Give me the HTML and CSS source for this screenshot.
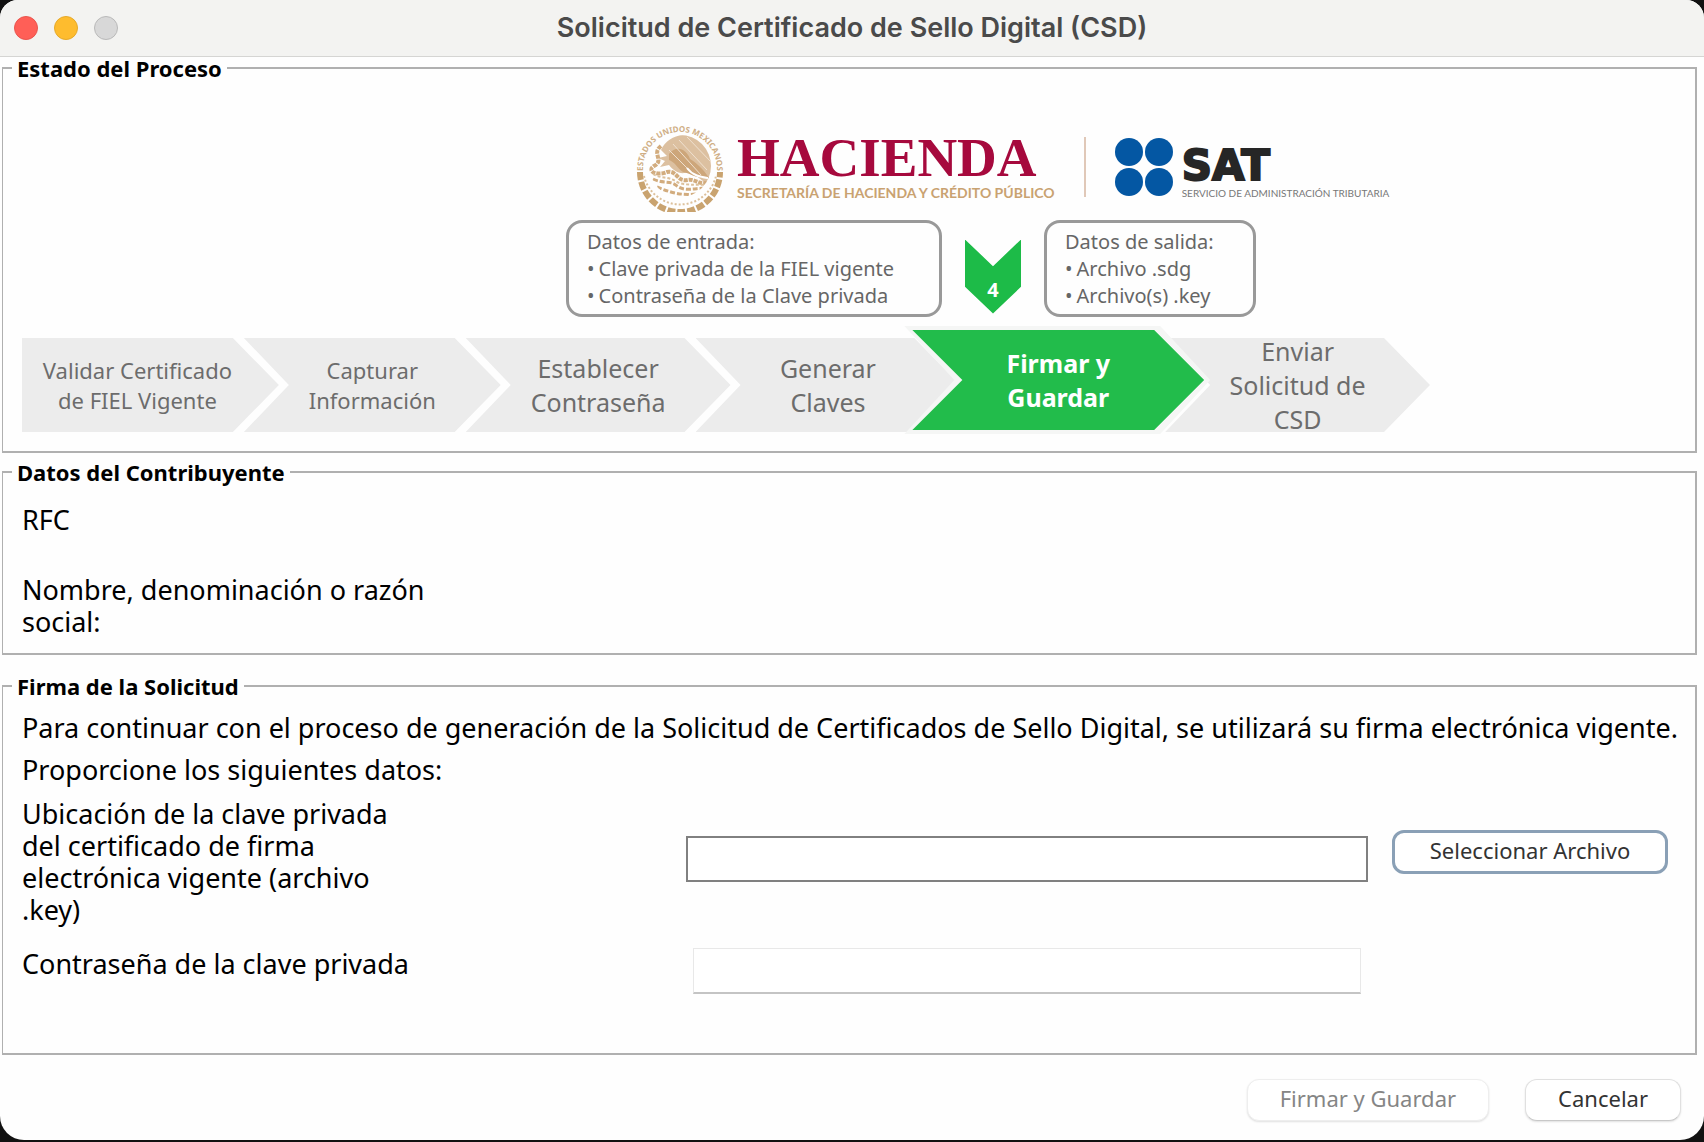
FILE: index.html
```html
<!DOCTYPE html>
<html lang="es">
<head>
    <meta charset="UTF-8">
    <meta name="viewport" content="width=device-width, initial-scale=1.0">
    <title>Solicitud de Certificado de Sello Digital (CSD)</title>
    <link rel="stylesheet" href="styles.css">
</head>
<body>
    <div class="window">
        <header class="titlebar">
            <div class="lights">
                <button type="button" class="light red" aria-label="Cerrar"></button>
                <button type="button" class="light yellow" aria-label="Minimizar"></button>
                <button type="button" class="light" aria-label="Ampliar" disabled></button>
            </div>
            <h1>Solicitud de Certificado de Sello Digital (CSD)</h1>
        </header>

        <form>
            <fieldset class="process">
                <legend>Estado del Proceso</legend>
                <div class="logos">
                    <svg class="emblem" viewBox="0 0 90 90" aria-hidden="true">
                        <defs>
                            <path id="ring" d="M8 47 A37 37 0 0 1 82 47"/>
                            <clipPath id="disc"><circle cx="45" cy="44" r="31"/></clipPath>
                        </defs>
                        <text class="ring-text"><textPath href="#ring" startOffset="50%" text-anchor="middle">ESTADOS UNIDOS MEXICANOS</textPath></text>
                        <g clip-path="url(#disc)">
                            <path fill="#dcc0a0" d="M26 28 C34 10 60 8 74 22 C82 36 78 52 72 62 L64 56 C60 52 55 50 50 51 C43 52 38 48 34 43 L25 45 L30 39 L23 36 L32 34 Z"/>
                            <path fill="#cda67a" d="M34 32 C42 22 52 28 55 37 C60 40 68 46 74 56 C62 57 54 51 48 50 C42 46 40 40 34 38 Z"/>
                            <path fill="none" stroke="#efe0cf" stroke-width="1" d="M44 18 L72 48 M52 15 L77 41 M38 22 L66 53 M60 14 L79 34 M34 28 L52 46"/>
                            <path fill="none" stroke="#fff" stroke-width="2" d="M52 46 C58 54 66 55 73 56"/>
                            <path fill="none" stroke="#d2ac7e" stroke-width="4" stroke-dasharray="4 1" d="M26 24 C16 32 30 38 19 44 C10 50 24 54 32 50 C42 48 42 60 52 58 C60 56 64 64 74 60"/>
                            <path fill="none" stroke="#d2ac7e" stroke-width="3" stroke-dasharray="5 2" d="M18 57 C28 62 36 58 42 64 C50 70 60 66 72 66 M22 65 C34 70 48 75 66 71"/>
                            <path fill="none" stroke="#dcc09b" stroke-width="2" stroke-dasharray="3 2" d="M18 52 C26 57 34 54 42 60 C50 64 60 62 72 63"/>
                        </g>
                        <path fill="none" stroke="#c9a36f" stroke-width="6" stroke-dasharray="8 2" d="M5 50 A40 40 0 0 0 85 50"/>
                        <path fill="none" stroke="#dcc09b" stroke-width="2" stroke-dasharray="2 2" d="M9 54 A37 37 0 0 0 81 54"/>
                    </svg>
                    <div class="hacienda">
                        <strong>HACIENDA</strong>
                        <span>SECRETARÍA DE HACIENDA Y CRÉDITO PÚBLICO</span>
                    </div>
                    <div class="divider"></div>
                    <svg class="dots" viewBox="0 0 58 60" aria-hidden="true">
                        <g fill="#0457a3">
                            <circle cx="14" cy="15" r="14"/>
                            <circle cx="44" cy="15" r="14"/>
                            <circle cx="14" cy="45" r="14"/>
                            <circle cx="44" cy="45" r="14"/>
                        </g>
                    </svg>
                    <div class="sat">
                        <strong>SAT</strong>
                        <span>SERVICIO DE ADMINISTRACIÓN TRIBUTARIA</span>
                    </div>
                </div>

                <div class="data">
                    <div class="note note-in">
                        <p>Datos de entrada:</p>
                        <ul>
                            <li>Clave privada de la FIEL vigente</li>
                            <li>Contraseña de la Clave privada</li>
                        </ul>
                    </div>
                    <div class="marker"><span>4</span></div>
                    <div class="note note-out">
                        <p>Datos de salida:</p>
                        <ul>
                            <li>Archivo .sdg</li>
                            <li>Archivo(s) .key</li>
                        </ul>
                    </div>
                </div>

                <ol class="steps">
                    <li class="small first">Validar Certificado<br>de FIEL Vigente</li>
                    <li class="small">Capturar<br>Información</li>
                    <li>Establecer<br>Contraseña</li>
                    <li>Generar<br>Claves</li>
                    <li class="active" aria-current="step"><span>Firmar y<br>Guardar</span></li>
                    <li>Enviar<br>Solicitud de<br>CSD</li>
                </ol>
            </fieldset>

            <fieldset class="taxpayer">
                <legend>Datos del Contribuyente</legend>
                <p>RFC</p>
                <p>Nombre, denominación o razón social:</p>
            </fieldset>

            <fieldset class="signature">
                <legend>Firma de la Solicitud</legend>
                <p>Para continuar con el proceso de generación de la Solicitud de Certificados de Sello Digital, se utilizará su firma electrónica vigente.</p>
                <p>Proporcione los siguientes datos:</p>
                <div class="fields">
                    <label for="key-file">Ubicación de la clave privada del certificado de firma electrónica vigente (archivo .key)</label>
                    <input type="text" id="key-file" class="key-file">
                    <button type="button" class="btn btn-select">Seleccionar Archivo</button>
                    <label for="key-pass">Contraseña de la clave privada</label>
                    <input type="password" id="key-pass" class="key-pass">
                </div>
            </fieldset>

            <footer class="actions">
                <button type="submit" class="btn" disabled>Firmar y Guardar</button>
                <button type="button" class="btn">Cancelar</button>
            </footer>
        </form>
    </div>
</body>
</html>
```
FILE: styles.css
```css
* {
    box-sizing: border-box;
}

body {
    margin: 0;
    background: #111;
    color: #000;
    font-family: "Noto Sans", "Open Sans", sans-serif;
    font-size: 27px;
    line-height: 32px;
}

p, ul, ol {
    margin: 0;
    padding: 0;
    list-style: none;
}

.window {
    background: #fefefe;
    border-radius: 18px 18px 24px 24px;
    overflow: hidden;
}

/* title bar */
.titlebar {
    display: grid;
    grid-template-columns: 1fr auto 1fr;
    align-items: center;
    height: 57px;
    padding: 0 14px;
    background: #f3f3f1;
    border-bottom: 1px solid #d5d5d3;
}

.titlebar h1 {
    margin: 0;
    color: #4a4a4a;
    font-family: Inter, sans-serif;
    font-size: 27px;
    font-weight: 600;
}

.lights {
    display: flex;
    gap: 16px;
}

.light {
    width: 24px;
    height: 24px;
    padding: 0;
    border: 1px solid #b9b9b9;
    border-radius: 50%;
    background: #d8d8d8;
}

.light.red {
    background: #ff5f57;
    border-color: #e9554e;
}

.light.yellow {
    background: #febc2e;
    border-color: #e5a92a;
}

/* panels */
fieldset {
    min-width: 0;
    margin: 0 7px 0 2px;
    padding: 0 16px 0 19px;
    border: 2px solid #b0b0b0;
    border-left-width: 1px;
}

legend {
    margin-left: -10px;
    padding: 0 5px;
    font-size: 22px;
    font-weight: 700;
    line-height: 22px;
}

.process {
    padding-top: 43px;
    padding-bottom: 17px;
}

.taxpayer {
    margin-top: 8px;
    padding-top: 21px;
    padding-bottom: 15px;
}

.taxpayer p {
    max-width: 420px;
}

.taxpayer p + p {
    margin-top: 38px;
}

.signature {
    margin-top: 20px;
    padding-top: 15px;
    padding-bottom: 59px;
}

.signature p {
    margin-bottom: 10px;
}

/* logos */
.logos {
    display: flex;
    align-items: center;
    margin-left: 37%;
}

.emblem {
    width: 90px;
    height: 90px;
}

.ring-text {
    fill: #cfae85;
    font-size: 8px;
    font-weight: 700;
}

.hacienda, .sat {
    display: flex;
    flex-direction: column;
    white-space: nowrap;
}

.hacienda {
    margin-left: 12px;
}

.hacienda strong {
    color: #a6093d;
    font-family: "Liberation Serif", serif;
    font-size: 55px;
    line-height: 52px;
}

.hacienda span {
    color: #c9a271;
    font-family: Lato, sans-serif;
    font-size: 14px;
    font-weight: 700;
    line-height: 18px;
}

.divider {
    width: 2px;
    height: 60px;
    margin: 0 29px;
    background: #e0c8b8;
}

.dots {
    width: 58px;
    height: 60px;
}

.sat {
    margin-left: 9px;
    padding-top: 10px;
}

.sat strong {
    color: #262626;
    font-family: "DejaVu Sans", sans-serif;
    font-size: 42px;
    line-height: 42px;
    -webkit-text-stroke: 2px #262626;
}

.sat span {
    color: #777;
    font-family: Lato, sans-serif;
    font-size: 10px;
    line-height: 12px;
}

/* input and output of the current step */
.data {
    display: flex;
    align-items: center;
    margin: 8px 0 9px 544px;
}

.note {
    padding: 5px 18px;
    border: 3px solid #999;
    border-radius: 16px;
    color: #666;
    font-size: 20px;
    line-height: 27px;
    white-space: nowrap;
}

.note-in {
    width: 376px;
}

.note-out {
    width: 212px;
}

.note li {
    display: flex;
    gap: 4px;
}

.note li::before {
    content: "•";
}

.marker {
    display: flex;
    align-items: flex-end;
    justify-content: center;
    width: 56px;
    height: 74px;
    margin: 16px 23px 0;
    padding-bottom: 8px;
    background: #1dbb48;
    clip-path: polygon(0 0, 50% 36%, 100% 0, 100% 64%, 50% 100%, 0 64%);
    color: #fff;
    font-size: 20px;
    font-weight: 700;
}

/* process arrows */
.steps {
    display: flex;
    align-items: flex-end;
    max-width: 1408px;
}

.steps li {
    display: flex;
    flex: 265;
    align-items: center;
    justify-content: center;
    height: 94px;
    margin: 0 0 2px -35px;
    background: #ececec;
    clip-path: polygon(0 0, calc(100% - 46px) 0, 100% 50%, calc(100% - 46px) 100%, 0 100%, 45px 50%);
    color: #6c6c6c;
    font-size: 25px;
    line-height: 34px;
    text-align: center;
}

.steps .small {
    flex: 257;
    font-size: 22px;
    line-height: 30px;
}

.steps .first {
    flex: 231;
    margin-left: 0;
    padding-right: 26px;
    clip-path: polygon(0 0, calc(100% - 46px) 0, 100% 50%, calc(100% - 46px) 100%, 0 100%);
}

.steps .active {
    position: relative;
    z-index: 1;
    flex: 306;
    height: 108px;
    margin: 0 0 0 -56px;
    background: #f5f6f5;
    clip-path: polygon(0 0, calc(100% - 50px) 0, 100% 50%, calc(100% - 50px) 100%, 0 100%, 50px 50%);
}

.active span {
    flex: 1;
    margin: 0 6px 0 8px;
    padding: 16px 0;
    background: #22bc4b;
    clip-path: polygon(0 0, calc(100% - 50px) 0, 100% 50%, calc(100% - 50px) 100%, 0 100%, 50px 50%);
    color: #fff;
    font-weight: 700;
}

.steps .active + li {
    margin-left: -45px;
}

/* form fields */
.fields {
    display: grid;
    grid-template-columns: 664fr 682fr 300px;
    align-items: start;
    row-gap: 22px;
    padding-top: 2px;
    padding-right: 11px;
}

.fields label {
    max-width: 390px;
}

.fields label:first-child {
    max-width: 375px;
}

.fields input {
    height: 46px;
    padding: 0 8px;
    background: #fff;
    font: inherit;
}

.key-file {
    margin-top: 38px;
    border: 2px solid #808080;
}

.key-pass {
    margin: 0 7px;
    border: 1px solid #e8e8e8;
    border-bottom: 2px solid #c4c4c4;
}

.btn {
    height: 42px;
    padding: 0 32px 5px;
    border: 1px solid #e0e0e0;
    border-bottom-color: #c8c8c8;
    border-radius: 12px;
    background: #fff;
    box-shadow: 0 1px 2px rgba(0, 0, 0, 0.12);
    color: #333;
    font-family: inherit;
    font-size: 22px;
    line-height: 34px;
    white-space: nowrap;
}

.btn:disabled {
    border-color: #eee;
    color: #858585;
}

.btn-select {
    height: 44px;
    margin: 32px 0 0 24px;
    padding: 0 20px 5px;
    border: 3px solid #8aa0b6;
    box-shadow: none;
}

.actions {
    display: flex;
    justify-content: flex-end;
    gap: 36px;
    padding: 24px 23px 19px;
}
```
